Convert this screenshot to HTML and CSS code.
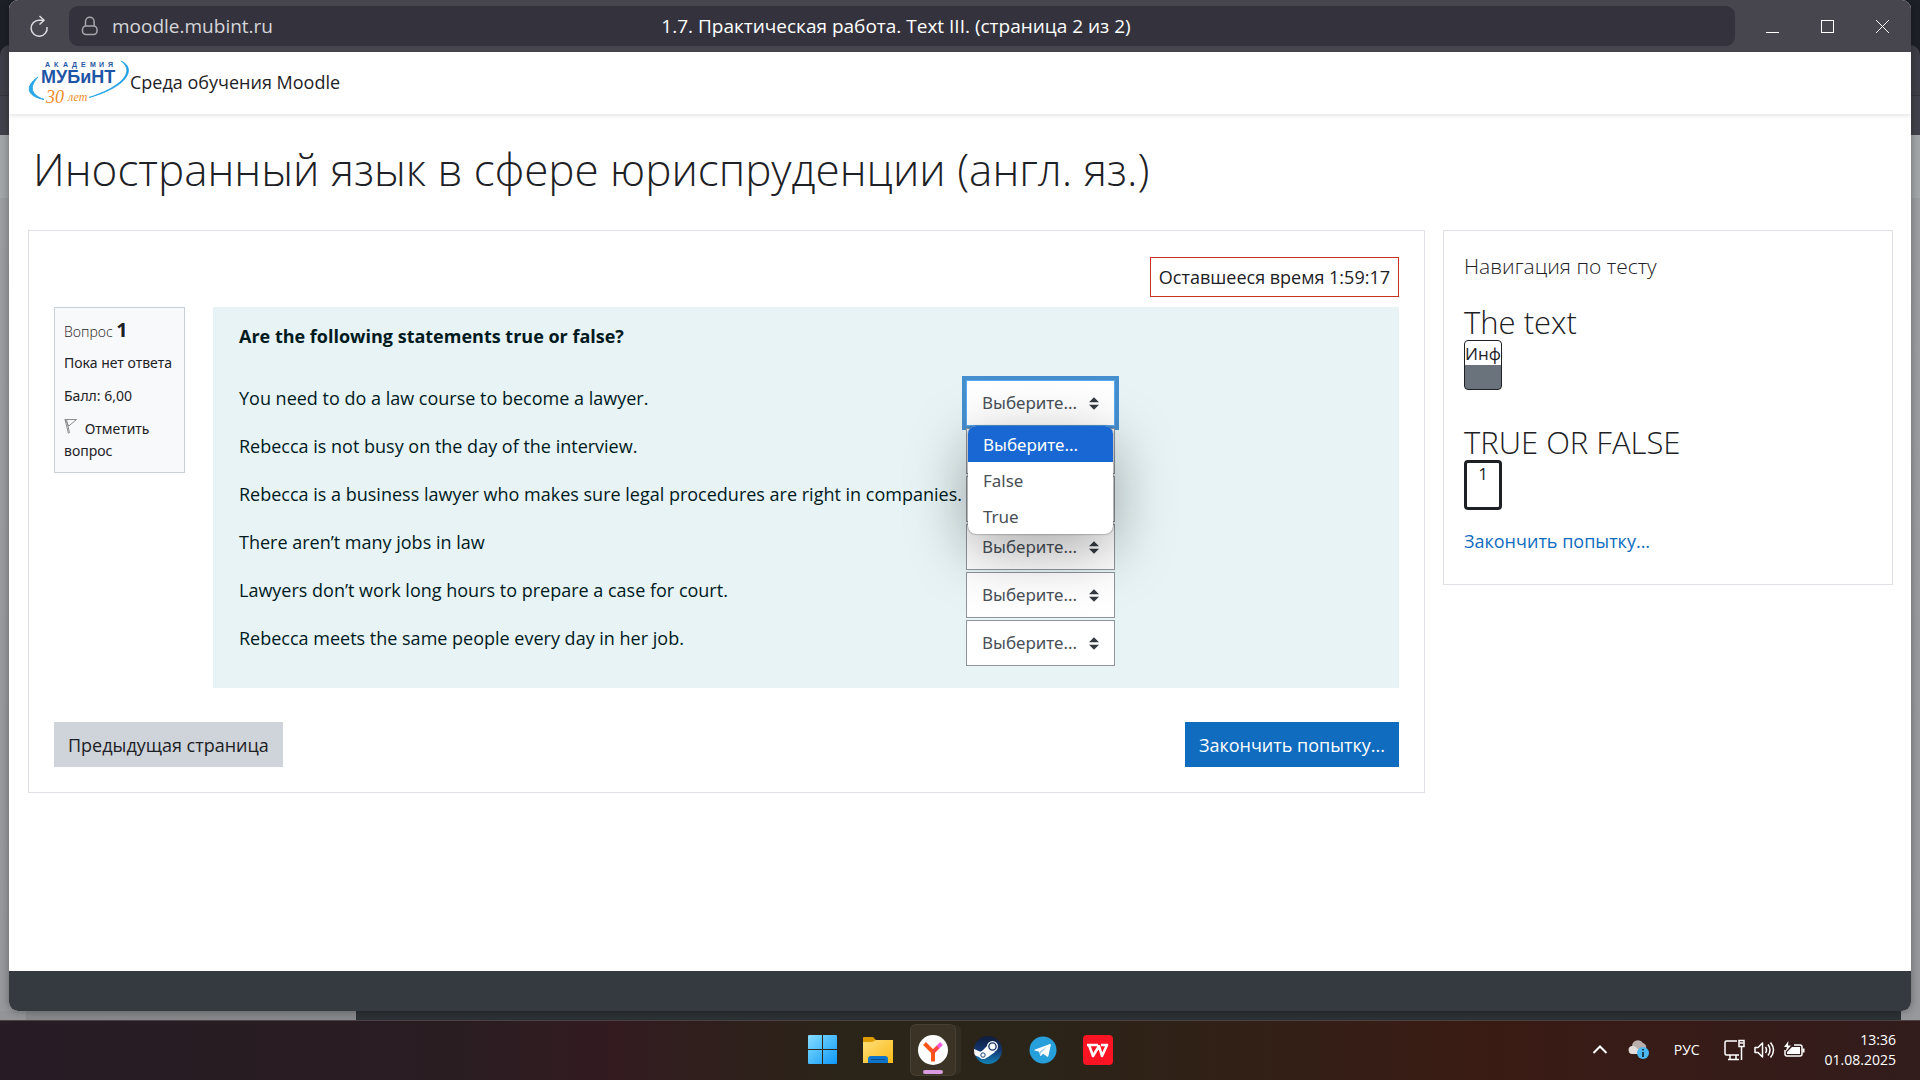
FILE: index.html
```html
<!DOCTYPE html>
<html lang="ru">
<head>
    <meta charset="UTF-8">
    <meta name="viewport" content="width=device-width, initial-scale=1.0">
    <title>1.7. Практическая работа. Text III. (страница 2 из 2)</title>
    <link rel="stylesheet" href="styles.css">
</head>
<body>
    <div class="stage">
        <!-- Window behind -->
        <div class="back-window">
            <div class="back-tabs"></div>
            <div class="back-page">
                <div class="back-side"></div>
                <div class="back-main"></div>
            </div>
        </div>

        <div class="window">
            <div class="titlebar">
                <button class="reload" aria-label="Обновить">
                    <svg width="20" height="24" viewBox="0 0 20 24" fill="none" stroke="#dcdce0" stroke-width="1.5"><path d="M14 6.200H10A8 8 0 1 0 18 13"/><path d="M10.500 2L15 6.200L10.500 10.500"/></svg>
                </button>
                <div class="address">
                    <div class="address-url">
                        <svg width="18" height="20" viewBox="0 0 18 20" fill="none" stroke="#a6a6ad" stroke-width="1.5"><path d="M4.500 10V5.500a4.300 4.300 0 0 1 8.600 0V10"/><rect x="1.500" y="10" width="14.500" height="8.500" rx="3.500"/></svg>
                        <span>moodle.mubint.ru</span>
                    </div>
                    <span class="address-title">1.7. Практическая работа. Text III. (страница 2 из 2)</span>
                </div>
                <div class="window-controls">
                    <button aria-label="Свернуть"><svg width="13" height="13" viewBox="0 0 13 13" stroke="#fff"><path d="M0 12.500h13"/></svg></button>
                    <button aria-label="Развернуть"><svg width="13" height="13" viewBox="0 0 13 13" stroke="#fff" fill="none"><rect x=".5" y=".5" width="12" height="12"/></svg></button>
                    <button aria-label="Закрыть"><svg width="13" height="13" viewBox="0 0 13 13" stroke="#fff"><path d="M0 0l13 13M13 0L0 13"/></svg></button>
                </div>
            </div>

            <header class="site-header">
                <a href="#" class="brand">
                    <svg class="logo" width="101" height="52" viewBox="0 -4 101 52">
                        <path d="M9 17C-4 26-3 36 15 39.500C3 35-1 28 9 17Z" fill="#2aa7e6" stroke="#2aa7e6"/>
                        <path d="M92 1C108 8 99 27 60 37.500C92 27 107 12 92 1Z" fill="#1c9fe3" stroke="#1c9fe3" stroke-width=".7"/>
                        <text class="logo-small" y="7" x="16 25 34 43 52 61 70 79">АКАДЕМИЯ</text>
                        <text class="logo-name" y="23" x="12">МУБиНТ</text>
                        <text class="logo-years" y="43" x="17">30</text>
                        <text class="logo-let" y="41" x="39">лет</text>
                    </svg>
                    <span>Среда обучения Moodle</span>
                </a>
            </header>

            <main class="page">
                <h1>Иностранный язык в сфере юриспруденции (англ. яз.)</h1>
                <div class="columns">
                    <section class="card quiz">
                        <div class="timer">Оставшееся время 1:59:17</div>
                        <div class="question">
                            <div class="info">
                                <h3>Вопрос <b>1</b></h3>
                                <p>Пока нет ответа</p>
                                <p>Балл: 6,00</p>
                                <p><svg width="14" height="15" viewBox="0 0 14 15" fill="none" stroke="#8b8b8b"><path d="M1 .5h11.500L4.800 7z M1 .5L4.500 14.500M2.500.5L5.500 14"/></svg> Отметить вопрос</p>
                            </div>
                            <div class="content">
                                <p class="prompt">Are the following statements true or false?</p>
                                <table class="answers">
                                    <tr>
                                        <td class="text"><label for="q1">You need to do a law course to become a lawyer.</label></td>
                                        <td class="control">
                                            <select id="q1" class="open"><option>Выберите...</option><option>False</option><option>True</option></select>
                                            <ul class="options">
                                                <li class="active">Выберите...</li>
                                                <li>False</li>
                                                <li>True</li>
                                            </ul>
                                        </td>
                                    </tr>
                                    <tr>
                                        <td class="text"><label for="q2">Rebecca is not busy on the day of the interview.</label></td>
                                        <td class="control"><select id="q2"><option>Выберите...</option><option>False</option><option>True</option></select></td>
                                    </tr>
                                    <tr>
                                        <td class="text"><label for="q3">Rebecca is a business lawyer who makes sure legal procedures are right in companies.</label></td>
                                        <td class="control"><select id="q3"><option>Выберите...</option><option>False</option><option>True</option></select></td>
                                    </tr>
                                    <tr>
                                        <td class="text"><label for="q4">There aren’t many jobs in law</label></td>
                                        <td class="control"><select id="q4"><option>Выберите...</option><option>False</option><option>True</option></select></td>
                                    </tr>
                                    <tr>
                                        <td class="text"><label for="q5">Lawyers don’t work long hours to prepare a case for court.</label></td>
                                        <td class="control"><select id="q5"><option>Выберите...</option><option>False</option><option>True</option></select></td>
                                    </tr>
                                    <tr>
                                        <td class="text"><label for="q6">Rebecca meets the same people every day in her job.</label></td>
                                        <td class="control"><select id="q6"><option>Выберите...</option><option>False</option><option>True</option></select></td>
                                    </tr>
                                </table>
                            </div>
                        </div>
                        <div class="buttons">
                            <button class="btn btn-secondary">Предыдущая страница</button>
                            <button class="btn btn-primary">Закончить попытку...</button>
                        </div>
                    </section>

                    <aside class="card nav">
                        <h5>Навигация по тесту</h5>
                        <h3>The text</h3>
                        <a href="#" class="qn info-page"><span>Инф</span></a>
                        <h3>TRUE OR FALSE</h3>
                        <a href="#" class="qn current"><span>1</span></a>
                        <a href="#" class="finish">Закончить попытку...</a>
                    </aside>
                </div>
            </main>
            <footer class="site-footer"></footer>
        </div>
    </div>

    <div class="taskbar">
        <div class="apps">
            <button class="app" aria-label="Пуск">
                <svg width="30" height="30" viewBox="0 0 30 30"><defs><linearGradient id="win" x1="0" y1="0" x2="30" y2="30" gradientUnits="userSpaceOnUse"><stop offset="0" stop-color="#86deff"/><stop offset="1" stop-color="#0a95f7"/></linearGradient></defs><path fill="url(#win)" d="M1 0h13v14H0V1q0-1 1-1zM15 0h13q1 0 1 1v13H15zM0 15h14v14H1q-1 0-1-1zM15 15h14v13q0 1-1 1H15z"/></svg>
            </button>
            <button class="app" aria-label="Проводник">
                <svg width="30" height="30" viewBox="0 0 30 30"><defs><linearGradient id="fold" x1="0" y1="0" x2="1" y2="1"><stop offset="0" stop-color="#ffdf7a"/><stop offset="1" stop-color="#f9b916"/></linearGradient></defs><path fill="#dd9c05" d="M0 3q0-1 1-1h9l3 3v5H0z"/><path fill="url(#fold)" d="M0 7h9l4-2h17v23H0z"/><path fill="#0d74c9" d="M5 28v-4q0-3 3-3h14q3 0 3 3v4z"/><path stroke="#084d8c" d="M8 24.500h14"/></svg>
            </button>
            <button class="app active" aria-label="Яндекс Браузер">
                <svg width="30" height="30" viewBox="0 0 30 30"><circle cx="15" cy="15" r="15" fill="#fff"/><path d="M15 26.500V17M6.500 8.500L15 17" stroke="#ff5418" stroke-width="4" fill="none"/><path d="M13.600 15.600L19 10.200l2.800 2.800-5.400 5.400z" fill="#fb4a3c"/><path d="M18.500 10.700l3.600-3.600 2.800 2.800-3.600 3.600z" fill="#f45ad8"/></svg>
            </button>
            <button class="app" aria-label="Steam">
                <svg width="28" height="28" viewBox="0 0 28 28"><defs><linearGradient id="st" x2="0" y2="1"><stop offset="0" stop-color="#101b3b"/><stop offset=".5" stop-color="#12376f"/><stop offset="1" stop-color="#1184b8"/></linearGradient><clipPath id="stc"><circle cx="14" cy="14" r="14"/></clipPath></defs><circle cx="14" cy="14" r="14" fill="url(#st)"/><g clip-path="url(#stc)"><path d="M0 13l7 3 6-6 8 6-7 5-4 2-10-4z" fill="#fff"/><circle cx="9" cy="19" r="4" fill="#fff"/><circle cx="9" cy="19" r="2.200" fill="none" stroke="#14457d" stroke-width="1"/></g><circle cx="18.500" cy="10.500" r="5.500" fill="#fff"/><circle cx="18.500" cy="10.500" r="3.600" fill="#fff" stroke="#163468" stroke-width="1.400"/></svg>
            </button>
            <button class="app" aria-label="Telegram">
                <svg width="28" height="28" viewBox="0 0 28 28"><circle cx="14" cy="14" r="13.500" fill="#279fda"/><path fill="#fff" d="M5.500 13.800L21 8q1-.3.800 1l-2.500 11.200q-.3 1-1.300.4l-4-2.900-2 2q-.8.600-1-.4l-.8-3.600-4.500-1.200q-.8-.4-.2-.7z"/><path d="M10.800 15.500L18 10.800l-5.800 6-.6 3z" fill="#9ccbe6"/></svg>
            </button>
            <button class="app" aria-label="WPS Office">
                <svg width="30" height="30" viewBox="0 0 30 30"><rect width="30" height="30" rx="4" fill="#fb1424"/><path d="M4 10h8M6 10l4 11 6-10 3 10 5-11h-6M12 10h3" fill="none" stroke="#fff" stroke-width="2.600" stroke-linejoin="round"/></svg>
            </button>
        </div>
        <div class="tray">
            <svg width="16" height="12" viewBox="0 0 16 12" fill="none" stroke="#fff" stroke-width="2"><path d="M1.500 9L8 2.500 14.500 9"/></svg>
            <svg class="cloud" width="22" height="20" viewBox="0 0 22 20"><path d="M5 14a4 4 0 0 1-1-8 6 6 0 0 1 11-3 5 5 0 0 1 3 6v5z" fill="#b9aeac"/><path d="M5 14a4 4 0 0 1 0-8q4 0 8 8z" fill="#e2dcda"/><circle cx="15" cy="13" r="6" fill="#4cb8f0"/><path d="M15 12v5M15 9v1.600" stroke="#10202c" stroke-width="1.600"/></svg>
            <span class="lang">РУС</span>
            <div class="status">
                <svg width="21" height="22" viewBox="0 0 21 22" fill="none" stroke="#fff" stroke-width="1.500"><path d="M13 2H2.500Q1 2 1 3.500v11Q1 16 2.500 16H15M6 16v4M12 16v4M4 20.500h11M15 1.500h5v6h-5zM17.500 8v13"/><path d="M15.500 4h4"/></svg>
                <svg width="21" height="18" viewBox="0 0 21 18" fill="none" stroke="#fff" stroke-width="1.500" stroke-linejoin="round"><path d="M1 6.500h3l4.500-4.500v14L4 11.500H1z"/><path d="M11.500 6q2 3 0 6M14 3.500q4 5.500 0 11M16.500 1.500q6 7.500 0 15"/></svg>
                <svg width="21" height="18" viewBox="0 0 21 18"><path d="M10 4h6q2 0 2 2v7q0 2-2 2H3q-2 0-2-2V9" fill="none" stroke="#fff" stroke-width="1.500"/><path d="M8 6h8v7H3v-2z M18.500 7.500h2v4h-2zM4.500 0L0 6h3L1.500 11 7 4.500H4z" fill="#fff"/></svg>
            </div>
            <div class="clock"><span>13:36</span><span>01.08.2025</span></div>
        </div>
    </div>
</body>
</html>
```
FILE: styles.css
```css
* {
    margin: 0;
    padding: 0;
    box-sizing: border-box;
}

body {
    min-height: 100vh;
    display: flex;
    flex-direction: column;
    background: #1d2027;
    font-family: 'Open Sans', 'Noto Sans', sans-serif;
    font-size: 18px;
    line-height: 28px;
    color: #1d2125;
}

a {
    color: #0f6cbf;
    text-decoration: none;
}

button,
select {
    font: inherit;
}

button {
    border: none;
    background: none;
}

svg {
    flex: none;
}

.stage {
    flex: 1;
    display: flex;
    position: relative;
    padding: 0 9px 9px;
}

/* window behind */
.back-window {
    position: absolute;
    inset: 45px 0 0;
    display: flex;
    flex-direction: column;
}

.back-tabs {
    height: 90px;
    background: linear-gradient(#3f3f49 50px, #35353e 50px, #35353e 51px, #42424c 51px);
    border-radius: 10px 10px 0 0;
}

.back-page {
    flex: 1;
    display: flex;
    align-items: flex-end;
    padding-right: 19px;
    background: linear-gradient(#a3a7a9 63px, #9c9ea1 63px, #96989b);
}

.back-side {
    width: 356px;
    height: 9px;
    background: #87888b;
    border-left: 26px solid #929497;
}

.back-main {
    flex: 1;
    height: 9px;
    background: #2c3136;
}

.window {
    flex: 1;
    display: flex;
    flex-direction: column;
    position: relative;
    background: #fff;
    border-radius: 9px;
    overflow: hidden;
    box-shadow: 0 0 8px rgba(0, 0, 0, 0.35);
}

.titlebar {
    display: flex;
    align-items: center;
    height: 52px;
    background: #47464f;
    color: #fff;
}

.reload {
    width: 60px;
    height: 40px;
    display: flex;
    align-items: center;
    justify-content: center;
}

.address {
    flex: 1;
    display: grid;
    grid-template-columns: 1fr auto 1fr;
    align-items: center;
    height: 40px;
    padding: 0 24px 0 12px;
    background: #34333d;
    border-radius: 9px;
    font-size: 19px;
}

.address-url {
    display: flex;
    align-items: center;
    gap: 13px;
    color: #d6d6da;
}

.window-controls {
    display: flex;
    width: 176px;
    padding-left: 10px;
}

.window-controls button {
    width: 55px;
    height: 40px;
}

.site-header {
    display: flex;
    align-items: center;
    height: 62px;
    padding: 0 20px 2px;
    box-shadow: 0 2px 4px rgba(0, 0, 0, 0.1);
}

.brand {
    display: flex;
    align-items: center;
    color: #1d2125;
}

.logo {
    overflow: visible;
}

.logo-small {
    font: bold 7px 'Liberation Sans', sans-serif;
    fill: #1e55a5;
}

.logo-name {
    font: bold 18px 'Liberation Sans', sans-serif;
    fill: #1e55a5;
}

.logo-years {
    font: italic 18px 'Liberation Serif', serif;
    fill: #f08a24;
}

.logo-let {
    font: italic 12px 'Liberation Serif', serif;
    fill: #f08a24;
}

.page {
    flex: 1;
    padding: 20px 18px 20px 19px;
}

h1 {
    font-size: 44px;
    font-weight: 300;
    line-height: 70px;
    padding-left: 5px;
    margin-bottom: 26px;
}

.columns {
    display: grid;
    grid-template-columns: 1fr 450px;
    align-items: start;
    gap: 18px;
}

.card {
    border: 1px solid #dee2e6;
    background: #fff;
}

.quiz {
    padding: 26px 25px 25px;
}

.timer {
    width: fit-content;
    margin: 0 0 10px auto;
    padding: 5px 8px;
    border: 1px solid #ca3120;
}

.question {
    display: flex;
    align-items: flex-start;
    gap: 28px;
}

.info {
    width: 131px;
    padding: 10px 9px;
    border: 1px solid #cad0d7;
    background: #f8f9fa;
    font-family: 'Noto Sans', sans-serif;
    font-size: 14px;
    line-height: 22px;
    white-space: nowrap;
}

.info h3 {
    font: 300 14px/24px 'Open Sans', sans-serif;
}

.info b {
    font-size: 20px;
    font-weight: 700;
}

.info p {
    margin-top: 11px;
}

.info h3 + p {
    margin-top: 8px;
}

.info p:last-child {
    white-space: normal;
}

.info svg {
    margin-right: 3px;
}

.content {
    flex: 1;
    padding: 15px 26px 21px;
    background: #e7f3f5;
    color: #001a1e;
}

.prompt {
    font-weight: 700;
    margin-bottom: 29px;
}

.answers {
    border-collapse: collapse;
}

.text {
    padding: 5px 4px 0 0;
    vertical-align: top;
    white-space: nowrap;
}

.control {
    position: relative;
    height: 48px;
    padding: 1px 0;
    font-family: 'Noto Sans', sans-serif;
    font-size: 17px;
}

select {
    display: block;
    appearance: none;
    width: 149px;
    height: 46px;
    padding: 0 15px;
    border: 1px solid #8f959e;
    border-radius: 0;
    color: #495057;
    background: #fff url("data:image/svg+xml,%3Csvg xmlns='http://www.w3.org/2000/svg' viewBox='0 0 4 5'%3E%3Cpath fill='%23343a40' d='M2 0L0 2h4zm0 5L0 3h4z'/%3E%3C/svg%3E") no-repeat right 15px center / 10px 13px;
}

select.open {
    border-color: #5babf2;
    outline: 4px solid #458fcf;
}

.options {
    position: absolute;
    z-index: 2;
    top: 47px;
    left: 2px;
    right: 2px;
    list-style: none;
    background: #fff;
    border-radius: 8px;
    overflow: hidden;
    color: #495057;
    box-shadow: 0 0 2px rgba(0, 0, 0, 0.6), 0 16px 60px rgba(0, 0, 0, 0.35);
}

.options li {
    padding: 5px 15px 3px;
}

.options .active {
    background: #1967d2;
    color: #fff;
}

.buttons {
    display: flex;
    justify-content: space-between;
    margin-top: 34px;
}

.btn {
    height: 45px;
    padding: 0 14px;
    cursor: pointer;
}

.btn-secondary {
    background: #ced4da;
    color: #1d2125;
}

.btn-primary {
    background: #0f6cbf;
    color: #fff;
}

.nav {
    padding: 20px 20px 29px;
}

.nav h5 {
    font-size: 21px;
    font-weight: 300;
    line-height: 30px;
}

.nav h3 {
    font-size: 31px;
    font-weight: 300;
    line-height: 36px;
    margin-top: 23px;
}

.qn {
    display: block;
    width: 38px;
    height: 50px;
    border: 1px solid #1d2125;
    border-radius: 4px;
    overflow: hidden;
    color: #1d2125;
    text-align: center;
    font-size: 17px;
    line-height: 26px;
}

.info-page {
    background: linear-gradient(#fff 24px, #6a737b 24px);
    margin-bottom: 34px;
}

.current {
    border-width: 3px;
    line-height: 22px;
}

.finish {
    display: block;
    margin-top: 17px;
}

.site-footer {
    height: 40px;
    background: #343a40;
}

.taskbar {
    display: grid;
    grid-template-columns: 1fr auto 1fr;
    align-items: center;
    height: 60px;
    padding-bottom: 2px;
    border-top: 1px solid #4a4243;
    background: linear-gradient(90deg, #271c25, #2a1d22 24%, #331b20 32%, #2b2418 44%, #2b2418 54%, #3a1b14 78%, #321c1c);
    color: #fff;
}

.apps {
    grid-column: 2;
    display: flex;
    gap: 11px;
}

.app {
    position: relative;
    display: flex;
    align-items: center;
    justify-content: center;
    width: 44px;
    height: 50px;
    border-radius: 5px;
}

.app.active {
    background: #3a3326;
    box-shadow: 0 0 0 1px #463f33, 6px 0 0 #332c20;
}

.app.active::after {
    content: "";
    position: absolute;
    bottom: 1px;
    width: 20px;
    height: 4px;
    border-radius: 2px;
    background: #d99be0;
}

.tray {
    display: flex;
    align-items: center;
    justify-content: flex-end;
    padding-right: 24px;
}

.cloud {
    margin: 0 24px 0 20px;
}

.lang {
    font-size: 14px;
    margin-right: 24px;
}

.status {
    display: flex;
    align-items: center;
    gap: 9px;
    margin-right: 20px;
}

.clock {
    display: flex;
    flex-direction: column;
    text-align: right;
    font-size: 14px;
    line-height: 20px;
}
```
